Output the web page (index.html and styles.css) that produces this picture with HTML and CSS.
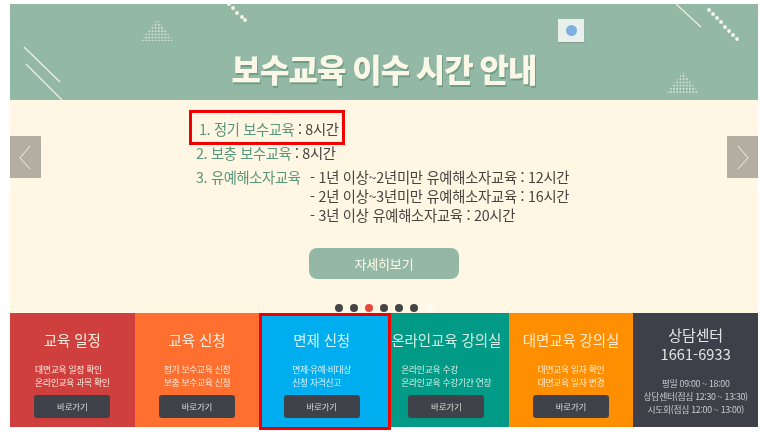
FILE: index.html
```html
<!DOCTYPE html>
<html lang="ko">
<head>
<meta charset="utf-8">
<title>보수교육 이수 시간 안내</title>
<link rel="stylesheet" href="styles.css">
</head>
<body>
<main class="page">
  <section class="hero">
    <header class="banner">
      <svg class="deco" viewBox="0 0 748 96" aria-hidden="true">
        <g stroke="#f3f1de" stroke-width="1.2" fill="none">
          <path d="M14 43 L50 78"/><path d="M16 60 L52 96"/><path d="M666 0 L691 23"/>
        </g>
        <g fill="#f8f6e6">
          <circle cx="219" cy="0" r="1.9"/><circle cx="223" cy="4" r="1.9"/><circle cx="227" cy="9" r="1.9"/><circle cx="232" cy="13" r="1.9"/><circle cx="235" cy="16" r="1.9"/>
          <circle cx="699" cy="6" r="1.9"/><circle cx="703" cy="10" r="1.9"/><circle cx="707" cy="14" r="1.9"/><circle cx="711" cy="18" r="1.9"/><circle cx="715" cy="23" r="1.9"/><circle cx="719" cy="27" r="1.9"/><circle cx="723" cy="31" r="1.9"/><circle cx="727" cy="35" r="1.9"/>
        </g>
        <defs>
          <pattern id="dots" width="3.2" height="3.2" patternUnits="userSpaceOnUse">
            <circle cx="1.6" cy="1.6" r="0.75" fill="#f5f3e2"/>
          </pattern>
        </defs>
        <path d="M147 15 L131 37 H164 Z" fill="url(#dots)"/>
        <path d="M673 68 L656 90 H690 Z" fill="url(#dots)"/>
      </svg>
      <h1 class="title">보수교육 이수 시간 안내</h1>
      <span class="badge"><span class="badge-dot"></span></span>
    </header>
    <div class="content">
      <button class="arrow arrow-prev" aria-label="이전">
        <svg viewBox="0 0 31 42"><path d="M20 10 L10 22 L20 33" fill="none" stroke="#f4f1e4" stroke-width="1"/></svg>
      </button>
      <ul class="hours">
        <li class="hour hour-marked"><span class="hour-name">1. 정기 보수교육</span> : 8시간</li>
        <li class="hour hour-second"><span class="hour-name">2. 보충 보수교육</span> : 8시간</li>
        <li class="hour hour-split">
          <span class="hour-name hour-name-wide">3. 유예해소자교육</span>
          <span class="hour-list">
            <span>- 1년 이상~2년미만 유예해소자교육 : 12시간</span>
            <span>- 2년 이상~3년미만 유예해소자교육 : 16시간</span>
            <span>- 3년 이상 유예해소자교육 : 20시간</span>
          </span>
        </li>
      </ul>
      <a class="more" href="#">자세히보기</a>
      <div class="pager">
        <i class="dot"></i><i class="dot"></i><i class="dot dot-on"></i><i class="dot"></i><i class="dot"></i><i class="dot"></i><i class="pause"></i>
      </div>
      <button class="arrow arrow-next" aria-label="다음">
        <svg viewBox="0 0 31 42"><path d="M11 10 L21 22 L11 33" fill="none" stroke="#f4f1e4" stroke-width="1"/></svg>
      </button>
    </div>
  </section>
  <nav class="tiles">
    <article class="tile tile-red">
      <h2>교육 일정</h2>
      <p>대면교육 일정 확인<br>온라인교육 과목 확인</p>
      <a href="#">바로가기</a>
    </article>
    <article class="tile tile-orange">
      <h2>교육 신청</h2>
      <p>정기 보수교육 신청<br>보충 보수교육 신청</p>
      <a href="#">바로가기</a>
    </article>
    <article class="tile tile-blue">
      <h2>면제 신청</h2>
      <p>면제·유예·비대상<br>신청 자격신고</p>
      <a href="#">바로가기</a>
    </article>
    <article class="tile tile-teal">
      <h2>온라인교육 강의실</h2>
      <p>온라인교육 수강<br>온라인교육 수강기간 연장</p>
      <a href="#">바로가기</a>
    </article>
    <article class="tile tile-amber">
      <h2>대면교육 강의실</h2>
      <p>대면교육 일자 확인<br>대면교육 일자 변경</p>
      <a href="#">바로가기</a>
    </article>
    <article class="tile tile-dark">
      <h2>상담센터<br><span class="phone">1661-6933</span></h2>
      <p>평일 09:00 ~ 18:00<br>상담센터(점심 12:30 ~ 13:30)<br>시도회(점심 12:00 ~ 13:00)</p>
    </article>
  </nav>
</main>
</body>
</html>
```
FILE: styles.css
```css
* , *::before, *::after { box-sizing: border-box; }
html, body { margin: 0; padding: 0; background: #fff; }
body { font-family: "Noto Sans CJK KR", "Noto Sans", sans-serif; }
.page { width: 768px; height: 441px; padding: 4px 10px 0; filter: blur(0.4px); }

.hero { width: 748px; }
.banner { position: relative; height: 96px; background: #93b9a6; display: flex; justify-content: center; }
.deco { position: absolute; inset: 0; width: 748px; height: 96px; }
.title {
  margin: 39px 0 0 0; font-size: 32px; line-height: 50px; height: 50px; font-weight: 900; color: #fbf7e6;
  letter-spacing: -0.9px; word-spacing: -1.5px; white-space: nowrap; text-shadow: 1px 2px 0 #6f9c85;
  position: relative;
}
.badge {
  position: absolute; left: 548px; top: 15px; width: 26px; height: 23px; background: #e9efeb;
  box-shadow: 0 1px 1px #7ea18f; display: flex; align-items: center; justify-content: center;
}
.badge-dot { width: 11px; height: 11px; border-radius: 50%; background: #7fb0e0; }

.content {
  position: relative; height: 213px; background: #fff6e4; padding-top: 10px;
  display: flex; flex-direction: column; align-items: center;
}
.arrow { position: absolute; top: 36px; width: 31px; height: 42px; padding: 0; border: 0; background: #b3aea2; }
.arrow svg { display: block; width: 31px; height: 42px; }
.arrow-prev { left: 0; }
.arrow-next { right: 0; }

.hours {
  list-style: none; margin: 0; padding: 0 0 0 186px; width: 748px;
  font-size: 14.3px; line-height: 19px; color: #45443f; letter-spacing: -0.35px;
}
.hour { margin-top: 5px; white-space: nowrap; }
.hour-marked { display: block; width: 156px; height: 35px; margin: 0 0 0 -7px; padding: 6px 0 0 7px; border: 3px solid #f00000; }
.hour-second { margin-top: -2px; }
.hour-name { color: #57967a; }
.hour-split { display: flex; align-items: flex-start; }
.hour-name-wide { width: 114px; }
.hour-list { display: flex; flex-direction: column; letter-spacing: -0.25px; }

.more {
  margin-top: 24px; width: 150px; height: 31px; border-radius: 8px; background: #94b8a5; color: #fdf9ea;
  text-decoration: none; font-size: 13px; line-height: 31px; text-align: center; letter-spacing: -0.2px;
}
.pager { margin-top: 25px; display: flex; gap: 7px; align-items: center; height: 8px; width: 748px; padding-left: 325px; }
.dot { width: 8px; height: 8px; border-radius: 50%; background: #454545; }
.dot-on { background: #e8483a; }
.pause { width: 8px; height: 8px; background: #fffaf0; }

.tiles { position: relative; width: 748px; height: 114px; display: grid; grid-template-columns: repeat(6, 1fr); }
.tile { color: #fbeee0; display: flex; flex-direction: column; align-items: center; padding-top: 16px; position: relative; }
.tile h2 { margin: 0; font-size: 14.5px; line-height: 22px; font-weight: 400; white-space: nowrap; letter-spacing: -0.1px; }
.tile p { margin: 12px 0 0; font-size: 8.8px; line-height: 13px; letter-spacing: -0.3px; white-space: nowrap; }
.tile a {
  margin-top: 6px; width: 76px; height: 23px; border-radius: 3px; background: #3f4249; color: #d8d8d8;
  font-size: 8.5px; line-height: 23px; text-align: center; text-decoration: none; letter-spacing: -0.2px;
}
.tile-red { background: #cf3f3e; }
.tile-orange { background: #ff6f2f; }
.tile-blue { background: #00aeef; color: #d6f2fb; z-index: 1; }
.tile-blue::after {
  content: ""; position: absolute; left: 0; top: 0; width: 132px; height: 116.5px; border: 3px solid #f00000;
  background: #00aeef; z-index: -1;
}
.tile-teal { background: #009a86; color: #d5f0e6; }
.tile-amber { background: #ff8e00; color: #ffeccd; }
.tile-dark { background: #3d4049; color: #e3e3e3; padding-top: 12px; }
.tile-dark h2 { font-size: 15px; line-height: 19px; text-align: center; }
.phone { font-size: 14.5px; letter-spacing: 0.1px; }
.tile-dark p { margin-top: 14px; text-align: center; color: #c9cacc; font-size: 8.8px; }
```
